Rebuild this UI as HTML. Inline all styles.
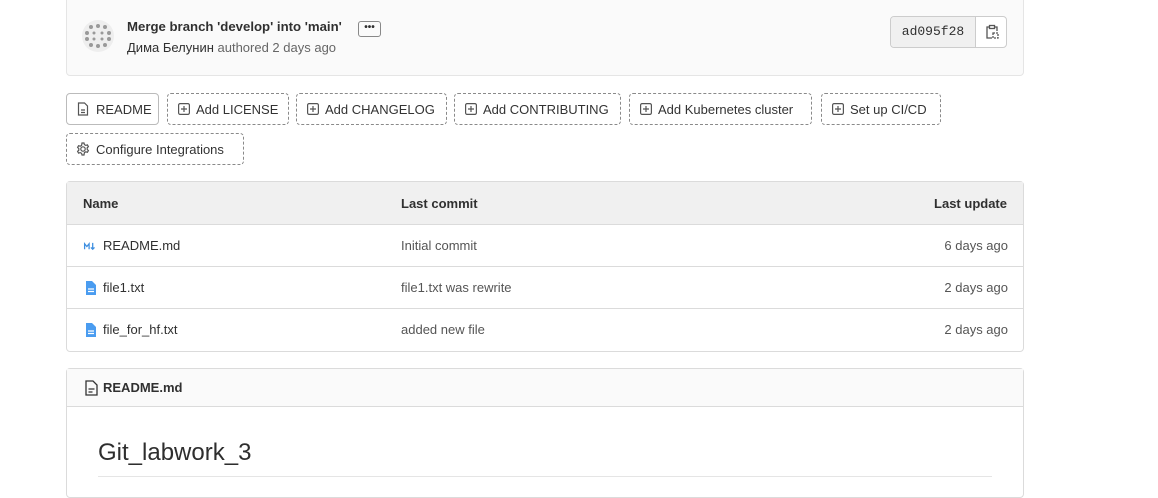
<!DOCTYPE html><html><head><style>
body{margin:0;width:1158px;height:479px;overflow:hidden;background:#fff;font-family:"Liberation Sans",sans-serif;font-size:13px;color:#303030;position:relative}
.a{position:absolute;box-sizing:border-box}
.btn{position:absolute;box-sizing:border-box;height:32px;border:1px dashed #8a8a8a;border-radius:4px;display:flex;align-items:center;padding-left:10px;font-size:13px;color:#333;white-space:nowrap}
.btn svg{margin-right:6px}
.row{position:absolute;left:66px;width:958px;height:42px;border-top:1px solid #dbdbdb;box-sizing:border-box}
.row span{position:absolute;top:13px}
</style></head><body>
<div class="a" style="left:66px;top:-10px;width:958px;height:86px;background:#fafafa;border:1px solid #e5e5e5;border-radius:4px"></div>
<svg class="a" style="left:82px;top:20px" width="32" height="32" viewBox="0 0 32 32"><circle cx="16" cy="16" r="16" fill="#eee"/><g fill="#999"><circle cx="9" cy="7" r="2"/><circle cx="16" cy="6" r="2"/><circle cx="23" cy="7" r="2"/><circle cx="5" cy="13" r="2"/><circle cx="12" cy="13" r="1.5"/><circle cx="20" cy="13" r="1.5"/><circle cx="27" cy="13" r="2"/><circle cx="5" cy="19" r="2"/><circle cx="12" cy="19" r="1.5"/><circle cx="20" cy="19" r="1.5"/><circle cx="27" cy="19" r="2"/><circle cx="9" cy="25" r="2"/><circle cx="16" cy="26" r="2"/><circle cx="23" cy="25" r="2"/></g></svg>
<div class="a" style="left:127px;top:19px;font-weight:bold;font-size:13.2px;color:#303030">Merge branch 'develop' into 'main'</div>
<div class="a" style="left:358px;top:21px;width:23px;height:16px;border:1px solid #888;border-radius:3px;font-size:10px;line-height:12px;text-align:center;font-weight:bold">•••</div>
<div class="a" style="left:127px;top:40px;color:#303030">Дима Белунин <span style="color:#666">authored 2 days ago</span></div>
<div class="a" style="left:890px;top:16px;width:117px;height:32px;border:1px solid #ccc;border-radius:4px;background:#fff;overflow:hidden">
<div class="a" style="left:0;top:0;width:85px;height:30px;background:#f0f0f0;border-right:1px solid #ccc;font-family:'Liberation Mono',monospace;font-size:13px;line-height:30px;text-align:center">ad095f28</div>
<svg class="a" style="left:93px;top:7px" width="16" height="16" viewBox="0 0 16 16" fill="none" stroke="#555" stroke-width="1.3"><path d="M5 3H3v11h5M11 3h2v4"/><rect x="5.5" y="1.5" width="5" height="3"/><rect x="9" y="9" width="5" height="5" stroke-dasharray="2 1"/></svg></div>

<div class="btn" style="left:66px;top:93px;width:93px;border-style:solid;border-color:#bbb;padding-left:9px"><svg width="14" height="14" viewBox="0 0 14 14" fill="none" stroke="#555" stroke-width="1.2"><path d="M2.5 1h6l3 3v9h-9z M5 8h4M5 10.5h4"/></svg>README</div>
<div class="btn" style="left:167px;top:93px;width:122px"><svg width="12" height="12" viewBox="0 0 12 12" fill="none" stroke="#555" stroke-width="1.2"><rect x=".6" y=".6" width="10.8" height="10.8" rx="1.5"/><path d="M6 3v6M3 6h6"/></svg>Add LICENSE</div>
<div class="btn" style="left:296px;top:93px;width:151px"><svg width="12" height="12" viewBox="0 0 12 12" fill="none" stroke="#555" stroke-width="1.2"><rect x=".6" y=".6" width="10.8" height="10.8" rx="1.5"/><path d="M6 3v6M3 6h6"/></svg>Add CHANGELOG</div>
<div class="btn" style="left:454px;top:93px;width:167px"><svg width="12" height="12" viewBox="0 0 12 12" fill="none" stroke="#555" stroke-width="1.2"><rect x=".6" y=".6" width="10.8" height="10.8" rx="1.5"/><path d="M6 3v6M3 6h6"/></svg>Add CONTRIBUTING</div>
<div class="btn" style="left:629px;top:93px;width:183px"><svg width="12" height="12" viewBox="0 0 12 12" fill="none" stroke="#555" stroke-width="1.2"><rect x=".6" y=".6" width="10.8" height="10.8" rx="1.5"/><path d="M6 3v6M3 6h6"/></svg>Add Kubernetes cluster</div>
<div class="btn" style="left:821px;top:93px;width:120px"><svg width="12" height="12" viewBox="0 0 12 12" fill="none" stroke="#555" stroke-width="1.2"><rect x=".6" y=".6" width="10.8" height="10.8" rx="1.5"/><path d="M6 3v6M3 6h6"/></svg>Set up CI/CD</div>
<div class="btn" style="left:66px;top:133px;width:178px;padding-left:9px"><svg width="14" height="14" viewBox="0 0 14 14" fill="none" stroke="#555" stroke-width="1.2"><circle cx="7" cy="7" r="2.2"/><path d="M6 1h2l.4 1.6 1.4.8 1.6-.5 1 1.7-1.2 1.2v1.6l1.2 1.2-1 1.7-1.6-.5-1.4.8L8 13H6l-.4-1.6-1.4-.8-1.6.5-1-1.7 1.2-1.2V6.6L1.6 5.4l1-1.7 1.6.5 1.4-.8z"/></svg>Configure Integrations</div>

<div class="a" style="left:66px;top:181px;width:958px;height:171px;border:1px solid #dbdbdb;border-radius:4px"></div>
<div class="a" style="left:67px;top:182px;width:956px;height:42px;background:#f0f0f0;font-weight:bold">
<span class="a" style="left:16px;top:14px">Name</span><span class="a" style="left:334px;top:14px">Last commit</span><span class="a" style="right:16px;top:14px">Last update</span></div>
<div class="row" style="top:224px"><svg class="a" style="left:17px;top:17px" width="14" height="9" viewBox="0 0 14 10" fill="none" stroke="#3d8ee0" stroke-width="1.4"><path d="M1 8V2l2.5 3L6 2v6M10 1v7M8 6l2 2 2-2"/></svg><span style="left:37px">README.md</span><span style="left:335px;color:#555">Initial commit</span><span style="right:16px;color:#555">6 days ago</span></div>
<div class="row" style="top:266px"><svg class="a" style="left:19px;top:14px" width="12" height="15" viewBox="0 0 12 15"><path d="M1 0h6l4 4v10H1z" fill="#4a9cf0"/><path d="M3 8h6M3 10.5h6" stroke="#fff" stroke-width="1.2"/></svg><span style="left:37px">file1.txt</span><span style="left:335px;color:#555">file1.txt was rewrite</span><span style="right:16px;color:#555">2 days ago</span></div>
<div class="row" style="top:308px"><svg class="a" style="left:19px;top:14px" width="12" height="15" viewBox="0 0 12 15"><path d="M1 0h6l4 4v10H1z" fill="#4a9cf0"/><path d="M3 8h6M3 10.5h6" stroke="#fff" stroke-width="1.2"/></svg><span style="left:37px">file_for_hf.txt</span><span style="left:335px;color:#555">added new file</span><span style="right:16px;color:#555">2 days ago</span></div>

<div class="a" style="left:66px;top:368px;width:958px;height:130px;border:1px solid #dbdbdb;border-radius:4px"></div>
<div class="a" style="left:67px;top:369px;width:956px;height:38px;background:#fafafa;border-bottom:1px solid #dbdbdb;font-weight:bold">
<svg class="a" style="left:18px;top:11px" width="13" height="16" viewBox="0 0 13 16" fill="none" stroke="#333" stroke-width="1.3"><path d="M1 1h7l4 4v10H1z M3.5 9h6M3.5 12h4"/></svg><span class="a" style="left:36px;top:11px">README.md</span></div>
<div class="a" style="left:98px;top:439px;font-size:24px;color:#2e2e2e">Git_labwork_3</div>
<div class="a" style="left:98px;top:476px;width:894px;height:1px;background:#e5e5e5"></div>
</body></html>
